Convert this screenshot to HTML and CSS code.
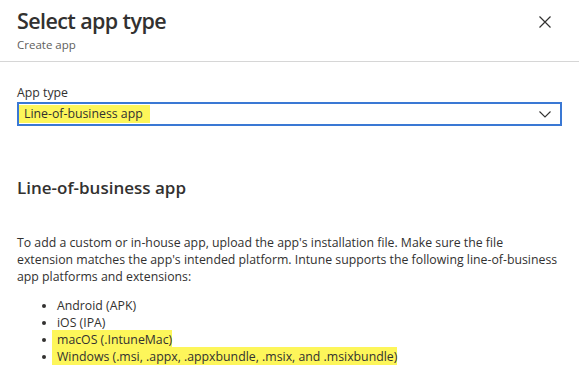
FILE: index.html
```html
<!DOCTYPE html>
<html lang="en">
<head>
  <meta charset="UTF-8">
  <title>Select app type</title>
  <link rel="stylesheet" href="styles.css">
</head>
<body>
  <header class="blade-header">
    <div class="blade-titles">
      <h1 class="blade-title">Select app type</h1>
      <div class="blade-subtitle">Create app</div>
    </div>
    <button class="close-btn" title="Close">
      <svg width="12" height="12" viewBox="0 0 12 12"><path d="M0.5 0.5 L11.5 11.5 M11.5 0.5 L0.5 11.5" stroke="#323130" stroke-width="1.2" fill="none"/></svg>
    </button>
  </header>

  <main class="blade-content">
    <label class="field-label">App type</label>
    <div class="dropdown">
      <span class="hl">Line-of-business app</span>
      <svg class="chevron" width="12" height="7" viewBox="0 0 12 7"><path d="M0.5 0.5 L6 6 L11.5 0.5" stroke="#323130" stroke-width="1.1" fill="none"/></svg>
    </div>

    <h2 class="section-title">Line-of-business app</h2>

    <p class="desc">To add a custom or in-house app, upload the app's installation file. Make sure the file extension matches the app's intended platform. Intune supports the following line-of-business app platforms and extensions:</p>

    <ul class="platforms">
      <li>Android (APK)</li>
      <li>iOS (IPA)</li>
      <li><span class="hl hl-item">macOS (.IntuneMac)</span></li>
      <li><span class="hl hl-item">Windows (.msi, .appx, .appxbundle, .msix, and .msixbundle)</span></li>
    </ul>
  </main>
</body>
</html>
```

FILE: styles.css
```css
/* Blade layout */
body {
  margin: 0;
  background: #fff;
  color: #323130;
  font-family: "Open Sans", "Noto Sans", sans-serif;
  font-size: 12.3px;
}

.blade-header {
  display: flex;
  justify-content: space-between;
  align-items: flex-start;
  padding: 4px 28px 0 17px;
  height: 57px;
  border-bottom: 1px solid #d6d6d6;
}

.blade-title {
  margin: 0;
  font-size: 21.5px;
  font-weight: 600;
  letter-spacing: -0.6px;
  line-height: 33px;
}

.blade-subtitle {
  margin-top: 0;
  font-size: 11.5px;
  color: #605e5c;
}

.close-btn {
  margin-top: 12px;
  padding: 0;
  border: none;
  background: none;
  line-height: 0;
}

/* Content */
.blade-content {
  padding: 21px 17px 0 17px;
}

.field-label {
  display: block;
  line-height: 19px;
}

.dropdown {
  display: flex;
  align-items: center;
  justify-content: space-between;
  height: 20px;
  padding: 0 9px 0 0;
  border: 2px solid #3a78d4;
}

.chevron {
  margin-top: 1px;
}

.hl {
  background: #fdf65a;
}

.dropdown .hl {
  padding: 0 7px 0 5px;
  line-height: 18px;
}

.section-title {
  margin: 50px 0 0 0;
  font-size: 17px;
  font-weight: 600;
  line-height: 24px;
}

.desc {
  margin: 34px 0 0 0;
  line-height: 17px;
  width: 543px;
}

/* Platforms list */
.platforms {
  margin: 12px 0 0 0;
  padding-left: 40px;
  line-height: 17px;
}

.hl-item {
  margin-left: -5px;
  padding: 1px 0 1px 5px;
}
```
